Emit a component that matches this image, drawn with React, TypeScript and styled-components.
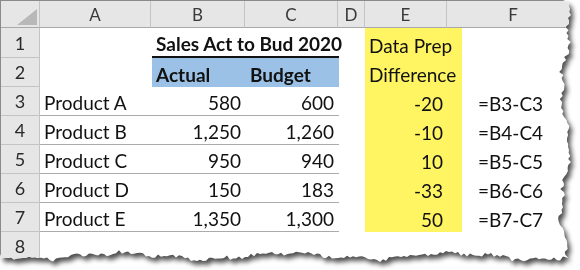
import React from "react";
import styled, { createGlobalStyle } from "styled-components";

const GlobalStyle = createGlobalStyle`
  html, body {
    margin: 0;
    padding: 0;
    background: #ffffff;
  }
  body {
    width: 580px;
    height: 270px;
    overflow: hidden;
  }
`;

const FONT = `Lato, "Liberation Sans", sans-serif`;

// ragged paper edge along the right and bottom side of the sheet
function tornEdge(w: number, h: number) {
  let seed = 91;
  const rnd = () => {
    seed = (seed * 16807) % 2147483647;
    return seed / 2147483647 - 0.5;
  };
  const pts: string[] = ["0px 0px"];
  for (let y = 0; y <= h - 12; y += 3) {
    const x = w - 15 + Math.sin(y / 19) * 4 + Math.sin(y / 6.1) * 2 + rnd() * 4;
    pts.push(`${x.toFixed(1)}px ${y}px`);
  }
  for (let x = w - 17; x >= 0; x -= 3) {
    const y = h - 14 + Math.sin(x / 26) * 3 + Math.sin(x / 7.3) * 1.5 + rnd() * 4;
    pts.push(`${x}px ${y.toFixed(1)}px`);
  }
  pts.push(`0px ${h - 16}px`);
  return `polygon(${pts.join(", ")})`;
}

const Frame = styled.div`
  width: 580px;
  height: 270px;
  filter: drop-shadow(3px 4px 2.5px rgba(0, 0, 0, 0.7));
`;

const Paper = styled.div<{ $edge: string }>`
  width: 580px;
  height: 270px;
  background: #ffffff;
  border-top: 1px solid #8a8a8a;
  border-left: 1px solid #8a8a8a;
  box-sizing: border-box;
  clip-path: ${(p) => p.$edge};
  font-family: ${FONT};
  overflow: hidden;
`;

const HeaderRow = styled.div`
  display: grid;
  grid-template-columns: 39px 111px 94px 93px 27px 82px 1fr;
  height: 27px;
`;

const ColHead = styled.div`
  background: #e6e6e6;
  border-right: 1px solid #c4c4c4;
  border-bottom: 1px solid #a8a8a8;
  color: #3a3a3a;
  font-size: 17px;
  display: flex;
  align-items: center;
  justify-content: center;
  padding-top: 1px;
`;

const Corner = styled(ColHead)`
  position: relative;
  &::after {
    content: "";
    position: absolute;
    left: 16px;
    top: 8px;
    width: 20px;
    height: 16px;
    background: #b8b8b8;
    clip-path: polygon(100% 0, 100% 100%, 0 100%);
  }
`;

const Sheet = styled.div`
  display: grid;
  grid-template-columns: 39px 112px 94px 93px 26px 97px 1fr;
  grid-template-rows: 30px repeat(6, 29px) 29px;
`;

const RowHead = styled.div`
  background: #e6e6e6;
  border-right: 1px solid #c4c4c4;
  border-bottom: 1px solid #c4c4c4;
  color: #2a2a2a;
  font-size: 18px;
  display: flex;
  align-items: center;
  justify-content: center;
`;

const Cell = styled.div<{
  $right?: boolean;
  $bold?: boolean;
  $fill?: string;
  $line?: boolean;
  $rule?: boolean;
  $span?: number;
  $padR?: number;
  $padL?: number;
}>`
  grid-column: span ${(p) => p.$span ?? 1};
  display: flex;
  align-items: flex-end;
  justify-content: ${(p) => (p.$right ? "flex-end" : "flex-start")};
  padding: 0 ${(p) => p.$padR ?? 5}px 1px ${(p) => p.$padL ?? 4}px;
  background: ${(p) => p.$fill ?? "transparent"};
  border-bottom: ${(p) =>
    p.$rule ? "2px solid #111" : p.$line ? "1px solid #ababab" : "0"};
  font-size: 19px;
  font-weight: ${(p) => (p.$bold ? 700 : 400)};
  color: #111;
  white-space: nowrap;
  overflow: visible;
  box-sizing: border-box;
`;

const BLUE = "#9bc2e6";
const YELLOW = "#fff462";

type Line = {
  name: string;
  actual: string;
  budget: string;
  diff: string;
  formula: string;
};

const lines: Line[] = [
  { name: "Product A", actual: "580", budget: "600", diff: "-20", formula: "=B3-C3" },
  { name: "Product B", actual: "1,250", budget: "1,260", diff: "-10", formula: "=B4-C4" },
  { name: "Product C", actual: "950", budget: "940", diff: "10", formula: "=B5-C5" },
  { name: "Product D", actual: "150", budget: "183", diff: "-33", formula: "=B6-C6" },
  { name: "Product E", actual: "1,350", budget: "1,300", diff: "50", formula: "=B7-C7" },
];

export default function App() {
  const edge = tornEdge(580, 270);
  return (
    <>
      <GlobalStyle />
      <Frame>
        <Paper $edge={edge}>
          <HeaderRow>
            <Corner />
            {["A", "B", "C", "D", "E", "F"].map((c) => (
              <ColHead key={c}>{c}</ColHead>
            ))}
          </HeaderRow>
          <Sheet>
            <RowHead>1</RowHead>
            <Cell />
            <Cell $span={2} $bold $rule>
              Sales Act to Bud 2020
            </Cell>
            <Cell />
            <Cell $fill={YELLOW}>Data Prep</Cell>
            <Cell />

            <RowHead>2</RowHead>
            <Cell />
            <Cell $bold $fill={BLUE}>Actual</Cell>
            <Cell $bold $fill={BLUE}>Budget</Cell>
            <Cell />
            <Cell $fill={YELLOW}>Difference</Cell>
            <Cell />

            {lines.map((l, i) => (
              <React.Fragment key={l.name}>
                <RowHead>{i + 3}</RowHead>
                <Cell $line>{l.name}</Cell>
                <Cell $line $right>{l.actual}</Cell>
                <Cell $line $right>{l.budget}</Cell>
                <Cell />
                <Cell $right $fill={YELLOW} $padR={19}>
                  {l.diff}
                </Cell>
                <Cell $padL={16}>{l.formula}</Cell>
              </React.Fragment>
            ))}

            <RowHead>8</RowHead>
            <Cell />
            <Cell />
            <Cell />
            <Cell />
            <Cell />
            <Cell />
          </Sheet>
        </Paper>
      </Frame>
    </>
  );
}
